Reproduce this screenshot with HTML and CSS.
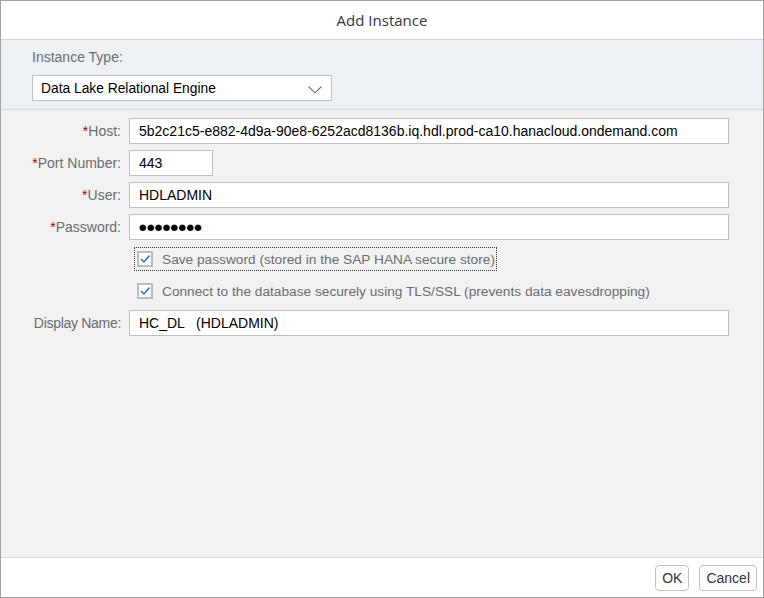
FILE: index.html
```html
<!DOCTYPE html>
<html>
<head>
<meta charset="utf-8">
<link rel="stylesheet" href="styles.css">
</head>
<body>
<div class="dialog">
  <div class="header">Add Instance</div>
  <div class="type-section">
    <div class="type-label">Instance Type:</div>
    <div class="select">
      <span>Data Lake Relational Engine</span>
      <svg class="chev" width="14" height="8" viewBox="0 0 14 8"><path d="M0.5 0.5 L7 6.8 L13.5 0.5" fill="none" stroke="#6a6d70" stroke-width="1.1"/></svg>
    </div>
  </div>
  <div class="form">
    <div class="grid">
      <label class="lbl"><span class="req">*</span>Host:</label>
      <div class="input">5b2c21c5-e882-4d9a-90e8-6252acd8136b.iq.hdl.prod-ca10.hanacloud.ondemand.com</div>

      <label class="lbl"><span class="req">*</span>Port Number:</label>
      <div class="input short">443</div>

      <label class="lbl"><span class="req">*</span>User:</label>
      <div class="input">HDLADMIN</div>

      <label class="lbl"><span class="req">*</span>Password:</label>
      <div class="input"><span class="dots">●●●●●●●●</span></div>

      <div></div>
      <div class="check-row"><div class="check focus"><span class="box"><svg width="12" height="10" viewBox="0 0 12 10"><path d="M2 5 L5 8 L10.5 1.5" fill="none" stroke="#2c6fbd" stroke-width="1.5"/></svg></span><span class="ctext">Save password (stored in the SAP HANA secure store)</span></div></div>

      <div></div>
      <div class="check-row"><div class="check"><span class="box"><svg width="12" height="10" viewBox="0 0 12 10"><path d="M2 5 L5 8 L10.5 1.5" fill="none" stroke="#2c6fbd" stroke-width="1.5"/></svg></span><span class="ctext">Connect to the database securely using TLS/SSL (prevents data eavesdropping)</span></div></div>

      <label class="lbl narrow">Display Name:</label>
      <div class="input pre">HC_DL   (HDLADMIN)</div>
    </div>
  </div>
  <div class="footer">
    <button class="btn">OK</button>
    <button class="btn">Cancel</button>
  </div>
</div>
</body>
</html>
```
FILE: styles.css
```css
* { box-sizing: border-box; }
html, body { margin: 0; padding: 0; }
body {
  font-family: "Liberation Sans", Arial, sans-serif;
  font-size: 14px;
  color: #32363a;
}
.dialog {
  width: 764px;
  height: 598px;
  border: 1px solid #a3a3a3;
  display: flex;
  flex-direction: column;
  background: #fff;
}
.header {
  height: 39px;
  border-bottom: 1px solid #d6d6d6;
  display: flex;
  align-items: center;
  justify-content: center;
  font-family: "Open Sans", "Noto Sans", sans-serif;
  font-size: 15px;
  color: #32363a;
  padding-bottom: 1px;
}
.type-section {
  background: #edf1f6;
  border-bottom: 1px solid #d6d6d6;
  padding: 8px 0 8px 31px;
  height: 70px;
}
.type-label {
  color: #6a6d70;
  font-size: 14px;
  height: 18px;
  line-height: 18px;
}
.select {
  margin-top: 9px;
  width: 300px;
  height: 26px;
  background: #fff;
  border: 1px solid #bfbfbf;
  display: flex;
  align-items: center;
  justify-content: space-between;
  padding: 0 9px 0 8px;
  color: #000;
  font-size: 13.8px;
}
.chev { margin-top: 4px; }
.form {
  flex: 1;
  background: #f2f2f2;
  padding: 8px 34px 0 0;
}
.grid {
  display: grid;
  grid-template-columns: 120px 1fr;
  column-gap: 8px;
  row-gap: 6px;
  align-items: center;
}
.lbl {
  text-align: right;
  color: #6a6d70;
  white-space: nowrap;
}
.lbl.narrow { letter-spacing: -0.3px; }
.req { color: #bb0000; }
.input {
  height: 26px;
  background: #fff;
  border: 1px solid #bfbfbf;
  padding: 0 9px;
  display: flex;
  align-items: center;
  color: #000;
  white-space: nowrap;
  overflow: hidden;
}
.input.short { width: 84px; }
.input.pre { white-space: pre; }
.dots {
  font-family: "DejaVu Sans", sans-serif;
  font-size: 8.6px;
  letter-spacing: 0.4px;
}
.check-row {
  height: 26px;
  display: flex;
  align-items: center;
  padding-left: 5px;
}
.check {
  display: flex;
  align-items: center;
  height: 24px;
  padding: 0 1px 0 2px;
  border: 1px dotted transparent;
  color: #6a6d70;
  font-size: 13.7px;
}
.check.focus { border-color: #333; }
.box {
  width: 16px;
  height: 16px;
  border: 2px solid #bcbcbc;
  background: #fff;
  display: flex;
  align-items: center;
  justify-content: center;
  margin-right: 9px;
}
.footer {
  height: 40px;
  border-top: 1px solid #d6d6d6;
  display: flex;
  justify-content: flex-end;
  align-items: center;
  gap: 10px;
  padding: 0 6px 0 0;
}
.btn {
  height: 26px;
  background: #fff;
  border: 1px solid #bfbfbf;
  border-radius: 4px;
  font-family: "Liberation Sans", Arial, sans-serif;
  font-size: 14px;
  color: #32363a;
  padding: 0 6px;
  margin-top: 1px;
}
```
